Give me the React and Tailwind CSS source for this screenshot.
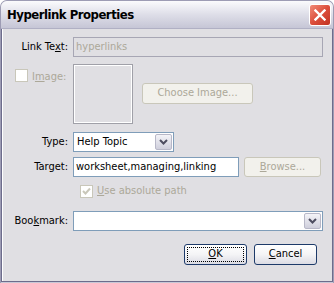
import React from 'react';

const font = { fontFamily: '"DejaVu Sans Condensed", "Liberation Sans", Arial, sans-serif' };

const Chevron = ({ color = '#4d4d60' }) => (
    <svg width="9" height="6" viewBox="0 0 9 6">
        <path d="M1 1 L4.5 4.5 L8 1" fill="none" stroke={color} strokeWidth="2" />
    </svg>
);

const DropButton = () => (
    <div className="w-[17px] h-full flex items-center justify-center border border-[#b8b8c8] bg-gradient-to-b from-[#f4f4f8] to-[#cfcfdc] rounded-[2px]">
        <Chevron />
    </div>
);

const Label = ({ children }) => (
    <div className="w-[70px] pr-[5px] text-right text-[11px] text-black">{children}</div>
);

const XpButton = ({ children, focused, disabled, className = '' }) => {
    if (disabled) {
        return (
            <div className={`flex items-center justify-center rounded-[3px] border border-[#c9c7ba] bg-[#f2f1ec] text-[11px] text-[#aca899] ${className}`}>
                {children}
            </div>
        );
    }
    return (
        <div className={`flex items-center justify-center rounded-[3px] border border-[#1d3a69] bg-gradient-to-b from-white via-[#f4f4f6] to-[#dcdce4] text-[11px] text-black p-[2px] ${className}`}>
            <div className={`w-full h-full flex items-center justify-center ${focused ? 'border border-dotted border-black' : ''}`}>
                {children}
            </div>
        </div>
    );
};

export default function App() {
    return (
        <div className="w-[334px] h-[283px] bg-white" style={font}>
            <div className="w-[334px] h-[283px] rounded-t-[7px] overflow-hidden bg-[#c8c8d6] border-t border-x border-[#9d9cb4] flex flex-col">
                {/* Title bar */}
                <div className="h-[28px] flex items-center justify-between pl-[6px] pr-[2px] bg-gradient-to-b from-[#fbfbfd] via-[#dedee8] to-[#c6c6d6] border-b border-[#b0b0c4]">
                    <span className="text-[13px] font-bold text-black tracking-[-0.5px]">Hyperlink Properties</span>
                    <div className="w-[22px] h-[22px] rounded-[3px] border border-white bg-gradient-to-br from-[#f08a78] via-[#dc4e3c] to-[#c23222] flex items-center justify-center">
                        <svg width="12" height="12" viewBox="0 0 12 12">
                            <path d="M1.5 1.5 L10.5 10.5 M10.5 1.5 L1.5 10.5" stroke="white" strokeWidth="2.4" strokeLinecap="square" />
                        </svg>
                    </div>
                </div>

                {/* Frame */}
                <div className="flex-1 border-x border-b border-[#6d6c8c] mb-[1px] bg-[#e0dfe3]">
                    <div className="h-full border-l border-white pt-[8px] pr-[9px] flex flex-col">
                        {/* Link Text */}
                        <div className="flex items-center h-[20px]">
                            <Label>Link Te<u>x</u>t:</Label>
                            <div className="flex-1 h-full border border-[#a7a6b4] flex items-center px-[2px] text-[11px] text-[#aca899]">
                                hyperlinks
                            </div>
                        </div>

                        {/* Image */}
                        <div className="flex items-center h-[60px] mt-[7px]">
                            <div className="w-[70px] h-full flex items-start pt-[5px] pl-[12px]">
                                <div className="w-[13px] h-[13px] border border-[#c9c7ba] bg-white" />
                                <span className="ml-[4px] text-[11px] text-[#aca899]">I<u>m</u>age:</span>
                            </div>
                            <div className="w-[60px] h-[60px] border border-[#a0a0a8] shadow-[inset_-1px_-1px_0_#ffffff,inset_1px_1px_0_#ffffff]" />
                            <XpButton disabled className="ml-[9px] w-[111px] h-[21px] mt-[-2px]">Choose Image...</XpButton>
                        </div>

                        {/* Type */}
                        <div className="flex items-center h-[20px] mt-[8px]">
                            <Label>Type:</Label>
                            <div className="w-[101px] h-full border border-[#7f9db9] bg-white flex items-center p-[1px]">
                                <span className="flex-1 px-[2px] text-[11px] text-black">Help Topic</span>
                                <DropButton />
                            </div>
                        </div>

                        {/* Target */}
                        <div className="flex items-center h-[20px] mt-[5px]">
                            <Label>Target:</Label>
                            <div className="w-[166px] h-full border border-[#7f9db9] bg-white flex items-center px-[2px] text-[11px] text-black">
                                worksheet,managing,linking
                            </div>
                            <XpButton disabled className="ml-[5px] w-[77px] h-[20px]"><span><u>B</u>rowse...</span></XpButton>
                        </div>

                        {/* Absolute path */}
                        <div className="flex items-center h-[13px] mt-[8px] pl-[77px]">
                            <div className="w-[13px] h-[13px] border border-[#c9c7ba] bg-white flex items-center justify-center">
                                <svg width="9" height="9" viewBox="0 0 9 9">
                                    <path d="M1 4 L3.5 6.5 L8 1.5" fill="none" stroke="#c9c7ba" strokeWidth="2" />
                                </svg>
                            </div>
                            <span className="ml-[4px] text-[11px] text-[#aca899]"><u>U</u>se absolute path</span>
                        </div>

                        {/* Bookmark */}
                        <div className="flex items-center h-[20px] mt-[13px]">
                            <Label>Boo<u>k</u>mark:</Label>
                            <div className="flex-1 h-full border border-[#7f9db9] bg-white flex items-center p-[1px]">
                                <span className="flex-1" />
                                <DropButton />
                            </div>
                        </div>

                        {/* Buttons */}
                        <div className="flex justify-end items-center h-[21px] mt-[13px] pr-[6px] gap-[7px]">
                            <XpButton focused className="w-[63px] h-[21px]"><span><u>O</u>K</span></XpButton>
                            <XpButton className="w-[63px] h-[21px]"><span><u>C</u>ancel</span></XpButton>
                        </div>
                    </div>
                </div>
            </div>
        </div>
    );
}
